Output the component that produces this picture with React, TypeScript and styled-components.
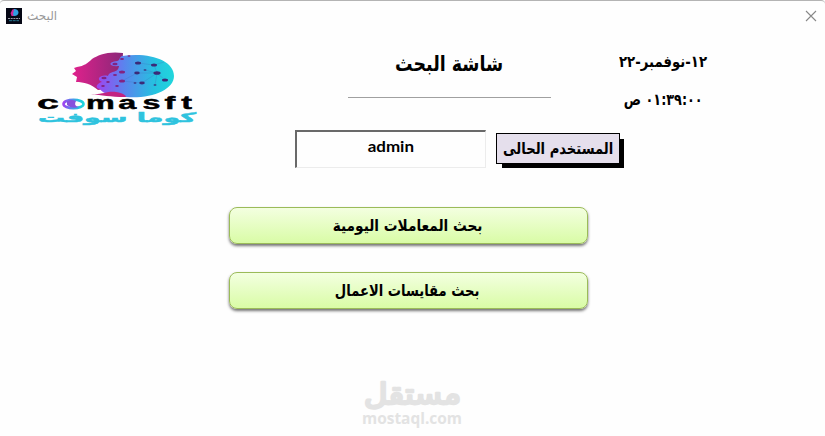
import React from 'react'
import styled, { createGlobalStyle } from 'styled-components'

const GlobalStyle = createGlobalStyle`
  * {
    box-sizing: border-box;
  }

  body {
    margin: 0;
    background: #fefefe;
    font-family: 'DejaVu Sans', sans-serif;
  }
`

const Window = styled.div`
  position: relative;
  display: flex;
  flex-direction: column;
  width: 825px;
  height: 436px;
  overflow: hidden;
  border-top: 1px solid #b4b4b4;
  border-radius: 4px 4px 0 0;
  background: #fefefe;
  color: #000;
`

const TopFragment = styled.svg`
  position: absolute;
  top: -1px;
  left: 397px;
`

const TitleBar = styled.header`
  display: flex;
  align-items: center;
  height: 29px;
  padding: 0 8px 0 6px;
`

const WindowTitle = styled.span`
  flex: 1;
  margin-left: 5px;
  color: #999;
  font-size: 12px;
  line-height: 16px;
`

const CloseButton = styled.button`
  display: flex;
  padding: 0;
  border: 0;
  background: none;
`

const Header = styled.section`
  display: flex;
  height: 100px;
`

const LogoCell = styled.div`
  width: 348px;
  padding: 20px 0 0 36px;
`

const LogoSvg = styled.svg`
  display: block;
  overflow: visible;
`

const HeadingCell = styled.div`
  width: 203px;
  height: 68px;
  padding-top: 22px;
  border-bottom: 1px solid #a0a0a0;
  text-align: center;
`

const ClockCell = styled.div`
  display: flex;
  flex-direction: column;
  gap: 14px;
  width: 224px;
  padding-top: 20px;
  text-align: center;
`

const ClockLine = styled.div`
  height: 24px;
`

const Text = styled.span<{ $size: number, $stretch?: number }>`
  display: inline-block;
  font-size: ${p => p.$size}px;
  font-weight: 700;
  line-height: 24px;
  white-space: nowrap;
  transform: scaleX(${p => p.$stretch ?? 1});
`

const UserRow = styled.section`
  display: flex;
  gap: 10px;
  padding-left: 295px;
`

const UserField = styled.div`
  width: 191px;
  height: 38px;
  padding-top: 2px;
  border: 1px solid #ececec;
  border-top: 2px solid #696969;
  border-left: 2px solid #696969;
  text-align: center;
  font-family: Lato, sans-serif;
`

const UserLabel = styled.div`
  display: flex;
  align-items: center;
  justify-content: center;
  width: 124px;
  height: 31px;
  margin-top: 3px;
  border: 1px solid #000;
  background: #e5dfec;
  box-shadow: 5px 5px 0 -1px #000;
`

const Actions = styled.nav`
  display: flex;
  flex-direction: column;
  gap: 28px;
  padding: 39px 0 0 229px;
`

const ActionButton = styled.button`
  width: 359px;
  height: 37px;
  padding: 0 2px 0 0;
  border: 1px solid #9bbb59;
  border-radius: 8px;
  background: linear-gradient(#f3ffe0, #d9fca6);
  box-shadow: 0 2px 3px rgba(0, 0, 0, 0.55);
  color: #000;
  font-family: inherit;
`

const Watermark = styled.footer`
  padding: 70px 0 0 361px;

  svg {
    display: block;
    overflow: visible;
  }
`

const nodes = [
  [113, 23, 3], [129, 25, 3], [132, 33, 3.6], [140, 40, 3], [112, 33, 2.8], [117, 43, 2.8], [130, 45, 1.5],
  [120, 30, 1.5], [97, 32, 3], [97, 41, 3], [90, 24, 2.6], [90, 35, 2], [104, 16, 1.5], [97, 19, 2],
  [79, 38, 2.6], [83, 42, 1.8], [78, 46, 1.8], [92, 46, 1.8], [110, 43, 1.5],
]

const Logo = () => (
  <LogoSvg width="162" height="76" viewBox="36 50 162 76">
    <defs>
      <linearGradient id="face" x1="0" x2="1">
        <stop offset="0" stopColor="#e0218c"/>
        <stop offset="1" stopColor="#8a2878"/>
      </linearGradient>
      <linearGradient id="brain" x1="0" x2="1">
        <stop offset="0" stopColor="#a044f0"/>
        <stop offset="0.35" stopColor="#5b83ee"/>
        <stop offset="0.75" stopColor="#25c2e0"/>
        <stop offset="1" stopColor="#20d6dc"/>
      </linearGradient>
    </defs>
    <path d="M123 53C108 51 98 55 92 59C88 63 84 66 77 67L74 68L76 71L72 74L77 77L76 82C84 82 91 84 98 90L121 87Z" fill="url(#face)"/>
    <path d="M122 56C149 52 174 60 174 76C174 90 151 99 126 97C112 96 103 94 100 89C94 88 97 83 102 82C95 79 101 74 108 76C110 70 118 74 119 66C109 67 107 62 117 61C120 61 119 57 122 56Z" fill="url(#brain)"/>
    <path d="M91 94C103 95 106 91 116 92C124 93 128 97 125 97C110 97 102 95 91 94Z" fill="#c22382"/>
    <g transform="translate(25 40)">
      <path d="M97 41L112 33L132 33L140 40M113 23L129 25L132 33L117 43L97 41M129 25L139 22M120 30L132 33L130 45" fill="none" stroke="#3d72bd" strokeWidth="0.5" opacity="0.6"/>
      {nodes.map(([x, y, r], i) => (
        <ellipse key={i} cx={x} cy={y} rx={r} ry={r * 0.5} fill={x > 108 ? '#3b2a78' : '#822382'}/>
      ))}
    </g>
    <g fontFamily="Liberation Sans" fontWeight="700" fontSize="17.5" stroke="#000" strokeWidth="0.4">
      <text transform="translate(37 109) scale(2.25 1)">c</text>
      <text transform="translate(86 109) scale(1.85 1)" x="0 17.500 30.500 42.500 51.500">masft</text>
    </g>
    <ellipse cx="73.500" cy="104" rx="10" ry="4.300" fill="none" stroke="url(#brain)" strokeWidth="2.600"/>
    <path d="M67 101.500Q71 99 76 101Q73 106 79 107Q71 109 67 105Z" fill="#8751dc"/>
    <text x="117" y="121.500" textAnchor="middle" textLength="158" lengthAdjust="spacingAndGlyphs" direction="rtl" fontFamily="DejaVu Sans" fontWeight="700" fontSize="13" fill="#2fc3de" stroke="#2fc3de" strokeWidth="0.500">كوما سوفت</text>
  </LogoSvg>
)

const AppIcon = () => (
  <svg width="16" height="16" viewBox="0 0 16 16">
    <path d="M0 0H16V16H0Z" fill="#050714"/>
    <path d="M8.500 1C5 1 6 4 4.500 5L5.500 8H8.500Z" fill="#cc2795"/>
    <path d="M8 1C14 1 14 8 8 8C6 6 8 4 8 1Z" fill="#2f9fe2"/>
    <path d="M2 10.500H14" stroke="#9a9aa8" strokeDasharray="2 0.700"/>
    <path d="M3 12.700H13" stroke="#247890" strokeDasharray="3 0.700"/>
  </svg>
)

function App() {
  return (
    <>
      <GlobalStyle/>
      <Window>
        <TopFragment width="118" height="1">
          <path d="M1 0.500H117" stroke="#2d7390" strokeDasharray="4 8 5 3 6 2 5 5 4 11 6 3"/>
        </TopFragment>
        <TitleBar>
          <AppIcon/>
          <WindowTitle>البحث</WindowTitle>
          <CloseButton aria-label="Close">
            <svg width="12" height="12" viewBox="0 0 12 12">
              <path d="M1 1L11 11M11 1L1 11" stroke="#888" strokeWidth="1.100"/>
            </svg>
          </CloseButton>
        </TitleBar>
        <Header>
          <LogoCell><Logo/></LogoCell>
          <HeadingCell dir="rtl"><Text $size={21} $stretch={0.83}>شاشة البحث</Text></HeadingCell>
          <ClockCell dir="rtl">
            <ClockLine><Text $size={16} $stretch={0.83}>١٢-نوفمبر-٢٢</Text></ClockLine>
            <ClockLine><Text $size={16} $stretch={0.8}>٠١:٣٩:٠٠ ص</Text></ClockLine>
          </ClockCell>
        </Header>
        <UserRow>
          <UserField><Text $size={16} $stretch={1.06}>admin</Text></UserField>
          <UserLabel dir="rtl"><Text $size={16} $stretch={0.82}>المستخدم الحالى</Text></UserLabel>
        </UserRow>
        <Actions>
          <ActionButton dir="rtl"><Text $size={16} $stretch={0.855}>بحث المعاملات اليومية</Text></ActionButton>
          <ActionButton dir="rtl"><Text $size={16} $stretch={0.82}>بحث مقايسات الاعمال</Text></ActionButton>
        </Actions>
        <Watermark>
          <svg width="104" height="50" viewBox="361 379 104 50" fill="#e3e3e3">
            <text x="412.500" y="404" textAnchor="middle" direction="rtl" textLength="97" lengthAdjust="spacingAndGlyphs" fontFamily="DejaVu Sans" fontSize="29" stroke="#e3e3e3" strokeWidth="2.400" strokeLinejoin="round">مستقل</text>
            <text x="362" y="423.500" textLength="100" lengthAdjust="spacingAndGlyphs" fontFamily="Open Sans" fontWeight="700" fontSize="16">mostaql.com</text>
          </svg>
        </Watermark>
      </Window>
    </>
  )
}

export default App
